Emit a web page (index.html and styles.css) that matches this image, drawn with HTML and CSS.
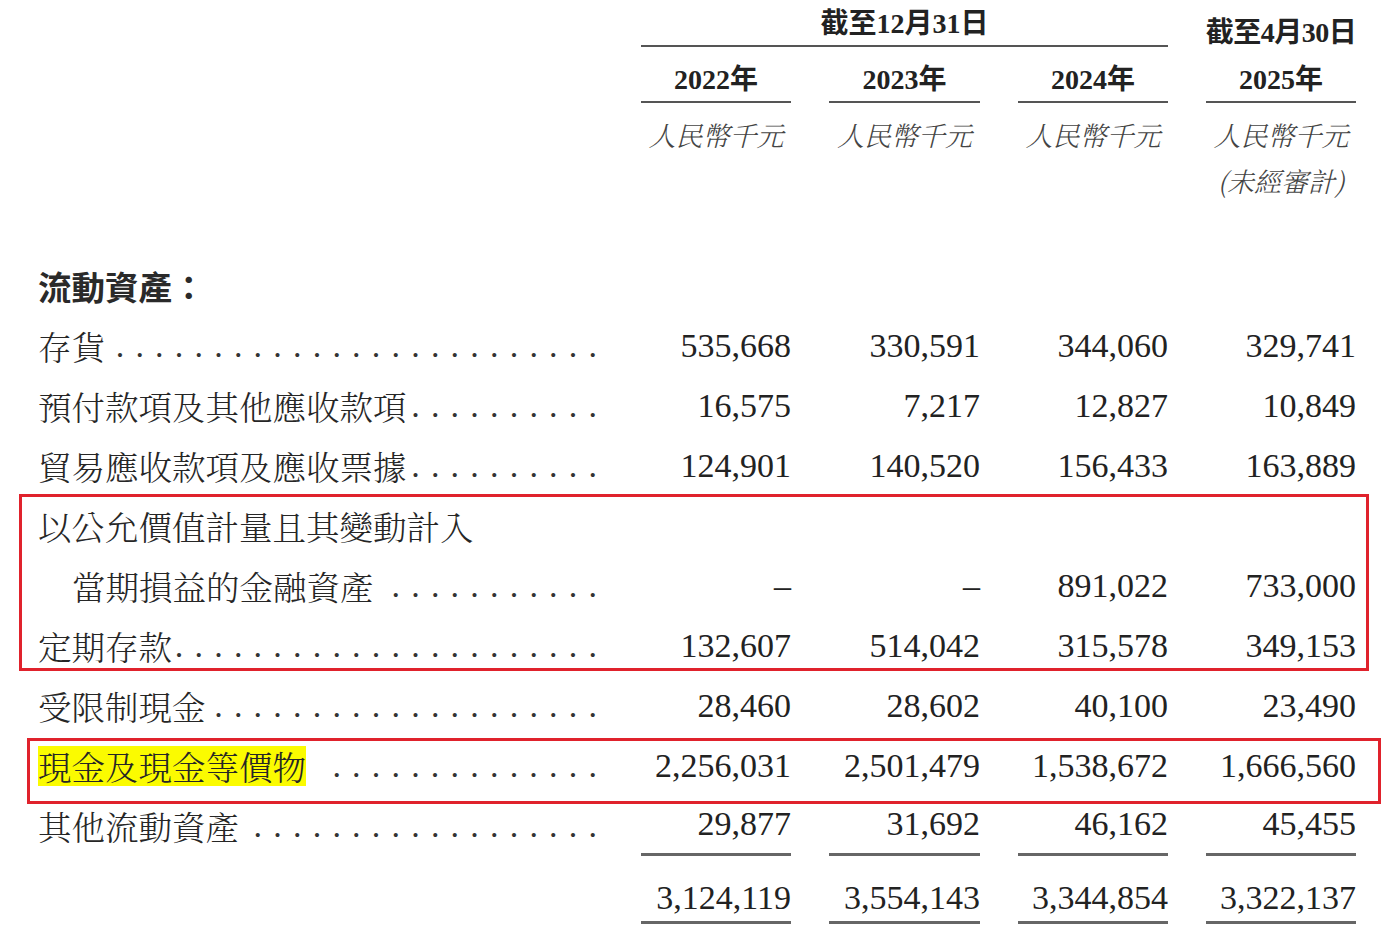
FILE: index.html
```html
<!DOCTYPE html>
<html lang="zh-Hant">
<head>
<meta charset="utf-8">
<title>流動資產</title>
<link rel="stylesheet" href="styles.css">
</head>
<body>
<div class="sheet">
  <div class="head">
    <div class="h-group">截至12月31日</div>
    <div class="h-side">截至4月30日</div>
    <div class="h-year c2">2022年</div>
    <div class="h-year c3">2023年</div>
    <div class="h-year c4">2024年</div>
    <div class="h-year c5">2025年</div>
    <div class="h-unit c2">人民幣千元</div>
    <div class="h-unit c3">人民幣千元</div>
    <div class="h-unit c4">人民幣千元</div>
    <div class="h-unit c5">人民幣千元<br>(未經審計)</div>
  </div>

  <div class="body">
    <div class="lbl bold">流動資產：</div>
    <div></div><div></div><div></div><div></div>

    <div class="lbl"><span>存貨</span><span class="lead"><span class="dots">.........................</span></span></div>
    <div class="num">535,668</div><div class="num">330,591</div><div class="num">344,060</div><div class="num">329,741</div>

    <div class="lbl"><span>預付款項及其他應收款項</span><span class="lead"><span class="dots">..........</span></span></div>
    <div class="num">16,575</div><div class="num">7,217</div><div class="num">12,827</div><div class="num">10,849</div>

    <div class="lbl"><span>貿易應收款項及應收票據</span><span class="lead"><span class="dots">..........</span></span></div>
    <div class="num">124,901</div><div class="num">140,520</div><div class="num">156,433</div><div class="num">163,889</div>

    <div class="lbl"><span>以公允價值計量且其變動計入</span></div>
    <div></div><div></div><div></div><div></div>

    <div class="lbl indent"><span>當期損益的金融資產</span><span class="lead"><span class="dots">...........</span></span></div>
    <div class="num">–</div><div class="num">–</div><div class="num">891,022</div><div class="num">733,000</div>

    <div class="lbl"><span>定期存款</span><span class="lead"><span class="dots">......................</span></span></div>
    <div class="num">132,607</div><div class="num">514,042</div><div class="num">315,578</div><div class="num">349,153</div>

    <div class="lbl"><span>受限制現金</span><span class="lead"><span class="dots">....................</span></span></div>
    <div class="num">28,460</div><div class="num">28,602</div><div class="num">40,100</div><div class="num">23,490</div>

    <div class="lbl"><span class="hl">現金及現金等價物</span><span class="lead"><span class="dots">..............</span></span></div>
    <div class="num">2,256,031</div><div class="num">2,501,479</div><div class="num">1,538,672</div><div class="num">1,666,560</div>

    <div class="lbl"><span>其他流動資產</span><span class="lead"><span class="dots">..................</span></span></div>
    <div class="num sub">29,877</div><div class="num sub">31,692</div><div class="num sub">46,162</div><div class="num sub">45,455</div>

    <div></div>
    <div class="num total">3,124,119</div><div class="num total">3,554,143</div><div class="num total">3,344,854</div><div class="num total">3,322,137</div>
  </div>

  <div class="mark mark-a"></div>
  <div class="mark mark-b"></div>
</div>
</body>
</html>
```

FILE: styles.css
```css
html, body {
  margin: 0;
  padding: 0;
  background: #ffffff;
}

.sheet {
  position: relative;
  width: 1399px;
  height: 939px;
  padding-left: 38px;
  box-sizing: border-box;
  overflow: hidden;
  color: #222;
}

.head,
.body {
  display: grid;
  grid-template-columns: 565px 150px 151px 150px 150px;
  column-gap: 38px;
}

.head {
  grid-template-rows: 47px auto auto;
  font-family: "Liberation Serif", "Noto Sans CJK TC", sans-serif;
  font-weight: 700;
  font-size: 28px;
  text-align: center;
  white-space: nowrap;
}

.h-group {
  grid-column: 2 / 5;
  grid-row: 1;
  line-height: 28px;
  padding-top: 10px;
  padding-bottom: 7px;
  border-bottom: 2px solid #555;
}

.h-side {
  grid-column: 5;
  grid-row: 1;
  align-self: end;
  justify-self: center;
  width: max-content;
  line-height: 28px;
  letter-spacing: -0.5px;
}

.c2 { grid-column: 2; }
.c3 { grid-column: 3; }
.c4 { grid-column: 4; }
.c5 { grid-column: 5; }

.h-year {
  grid-row: 2;
  line-height: 28px;
  padding-top: 19px;
  padding-bottom: 7px;
  border-bottom: 2px solid #555;
}

.h-unit {
  grid-row: 3;
  padding-top: 9px;
  line-height: 46px;
  font-family: "Noto Serif CJK TC", "Noto Sans CJK TC", sans-serif;
  font-style: italic;
  font-weight: 300;
  font-size: 27px;
  color: #444;
}

.body {
  margin-top: 52px;
  grid-template-rows: repeat(10, 60px) auto;
}

.lbl {
  display: flex;
  align-items: center;
  min-width: 0;
  padding-right: 6px;
  font-family: "Noto Serif CJK TC", "Noto Sans CJK TC", serif;
  font-weight: 300;
  font-size: 33.5px;
  line-height: 60px;
  color: #262626;
  white-space: nowrap;
}

.lbl.bold {
  font-family: "Noto Sans CJK TC", sans-serif;
  font-weight: 700;
  color: #2a2a2a;
}

.lbl.indent {
  padding-left: 34px;
}

.hl {
  display: inline-block;
  line-height: 40px;
  background: #fbfb00;
}

.lead {
  flex: 1 1 0;
  min-width: 0;
  display: flex;
  justify-content: flex-end;
}

.dots {
  flex-shrink: 0;
  white-space: nowrap;
  font-family: "Liberation Serif", serif;
  font-size: 34px;
  letter-spacing: 11.2px;
  margin-right: -11.2px;
  color: #333;
}

.num {
  text-align: right;
  font-family: "Liberation Serif", serif;
  font-size: 34px;
  line-height: 60px;
  color: #222;
  white-space: nowrap;
}

.num.sub {
  line-height: 56px;
  padding-bottom: 1px;
  border-bottom: 3px solid #666;
}

.num.total {
  line-height: 40px;
  padding-top: 22px;
  padding-bottom: 3px;
  border-bottom: 3px solid #666;
}

.mark {
  position: absolute;
  box-sizing: border-box;
  border: 3px solid #e0222c;
}

.mark-a {
  left: 19px;
  top: 494px;
  width: 1350px;
  height: 177px;
}

.mark-b {
  left: 27px;
  top: 738px;
  width: 1354px;
  height: 66px;
}
```
